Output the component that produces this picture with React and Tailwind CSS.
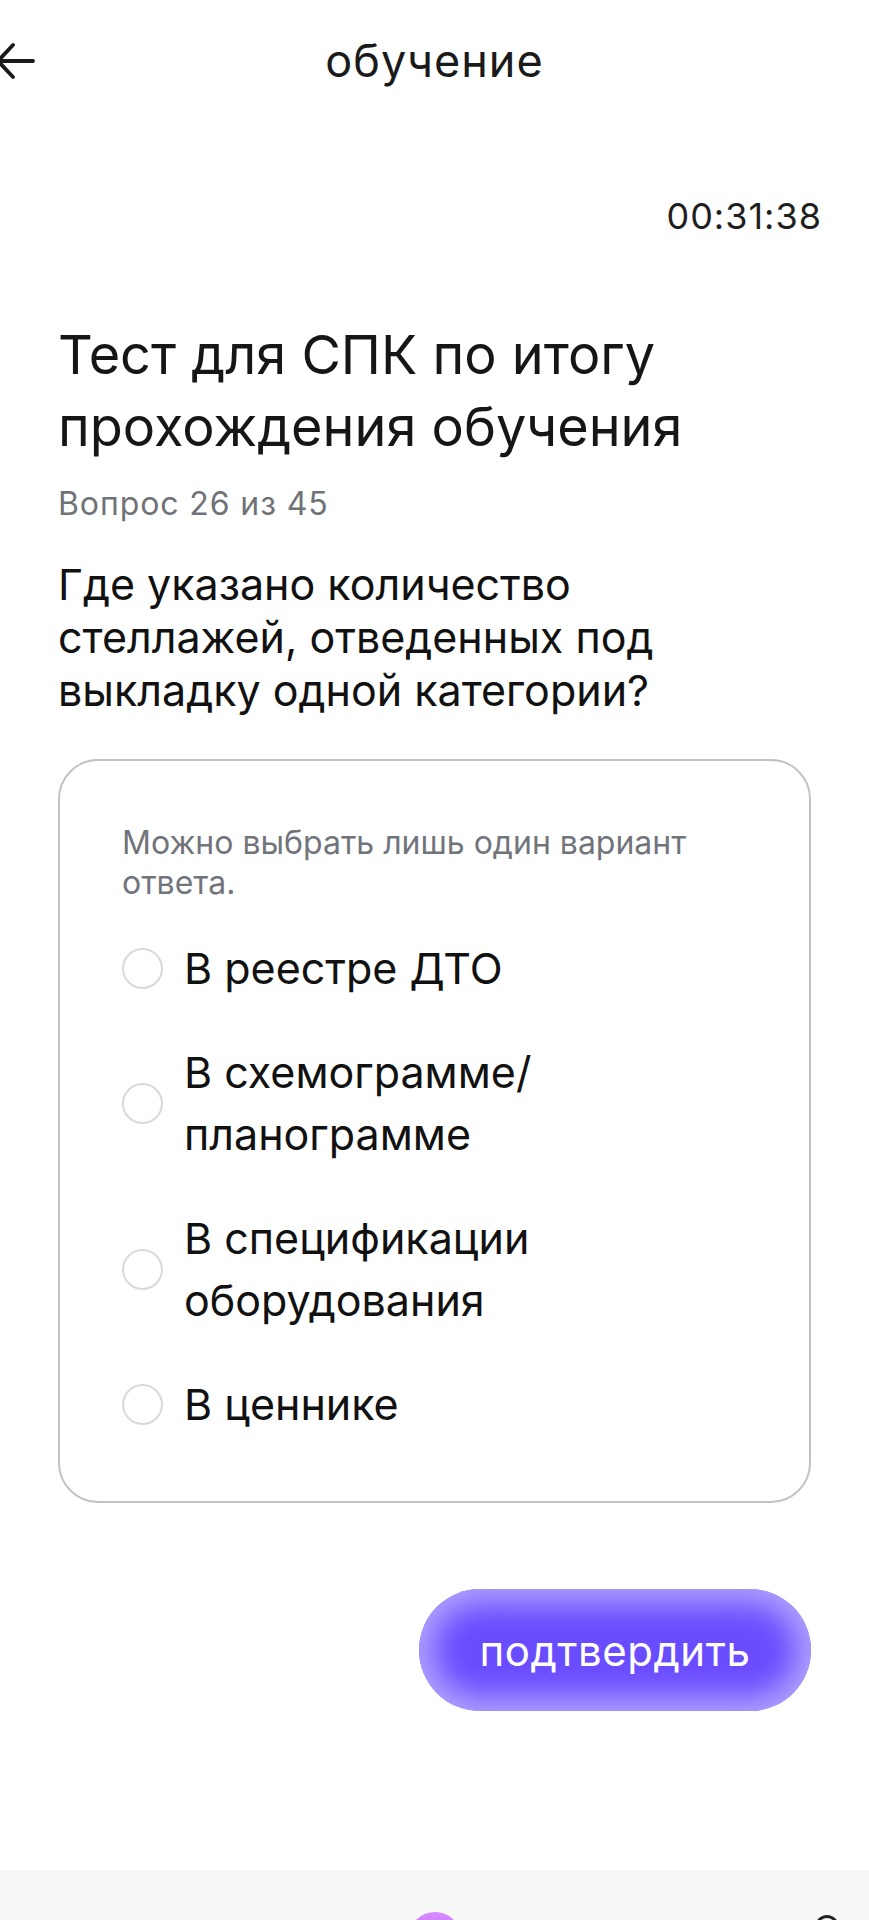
import { useState } from "react";

const options = [
  "В реестре ДТО",
  "В схемограмме/ планограмме",
  "В спецификации оборудования",
  "В ценнике",
];

export default function App() {
  const [selected, setSelected] = useState(null);

  return (
    <div className="relative h-[1920px] w-full overflow-hidden bg-white text-[#111] font-['Inter',sans-serif]">
      {/* header */}
      <div className="relative flex h-[122px] items-center justify-center">
        <button className="absolute left-[-6px] top-[41px] text-[#1a1a1a]">
          <svg width="42" height="40" viewBox="0 0 42 40" fill="none" stroke="currentColor" strokeWidth="3.8" strokeLinecap="round" strokeLinejoin="round">
            <path d="M39 20H6" />
            <path d="M19 4L4 20l15 16" />
          </svg>
        </button>
        <h1 className="text-[45px] font-normal tracking-[1px] text-[#1a1a1a]">обучение</h1>
      </div>

      {/* timer */}
      <div className="flex justify-end pr-[47px] pt-[74px]">
        <span className="text-[36px] leading-[40px] tracking-[1px] text-[#1f1f1f]">00:31:38</span>
      </div>

      <div className="px-[58px] pt-[83px]">
        <h2 className="text-[54px] leading-[72px] font-normal text-[#161616]">
          Тест для СПК по итогу прохождения обучения
        </h2>
        <p className="mt-[21px] text-[32px] leading-[40px] tracking-[0.9px] text-[#6f7378]">Вопрос 26 из 45</p>
        <p className="mt-[34px] text-[43px] leading-[53px] text-[#111]">
          Где указано количество стеллажей, отведенных под выкладку одной категории?
        </p>

        {/* answers card */}
        <div className="mt-[42px] h-[744px] rounded-[40px] border-2 border-[#bfc3c8] px-[62px] pt-[62px]">
          <p className="text-[32px] leading-[40px] text-[#71757b]">
            Можно выбрать лишь один вариант ответа.
          </p>
          <div className="mt-[34px] flex flex-col gap-[42px]">
            {options.map((opt, i) => (
              <label
                key={i}
                onClick={() => setSelected(i)}
                className="flex cursor-pointer items-center gap-[21px]"
              >
                <span
                  className={`flex h-[41px] w-[41px] shrink-0 items-center justify-center rounded-full border-2 ${
                    selected === i ? "border-[#6b4eff]" : "border-[#d9d9d9]"
                  }`}
                >
                  {selected === i && <span className="h-[21px] w-[21px] rounded-full bg-[#6b4eff]" />}
                </span>
                <span className="max-w-[380px] text-[43px] leading-[62px] text-[#111]">{opt}</span>
              </label>
            ))}
          </div>
        </div>

        {/* confirm */}
        <div className="mt-[86px] flex justify-end">
          <button className="h-[122px] w-[392px] rounded-full bg-[#6a4cff] text-[42px] tracking-[0.5px] text-white shadow-[inset_0_0_30px_14px_rgba(180,168,255,0.95)]">
            подтвердить
          </button>
        </div>
      </div>

      {/* bottom nav (cut off) */}
      <div className="absolute left-0 right-0 top-[1870px] h-[120px] bg-[#f7f7f8]">
        <div className="absolute left-[408px] top-[42px] h-[54px] w-[54px] rounded-full bg-gradient-to-b from-[#d98bff] to-[#a855f7]" />
        <div className="absolute left-[815px] top-[45px] h-[20px] w-[24px] rounded-t-full border-[3px] border-[#222]" />
      </div>
    </div>
  );
}
